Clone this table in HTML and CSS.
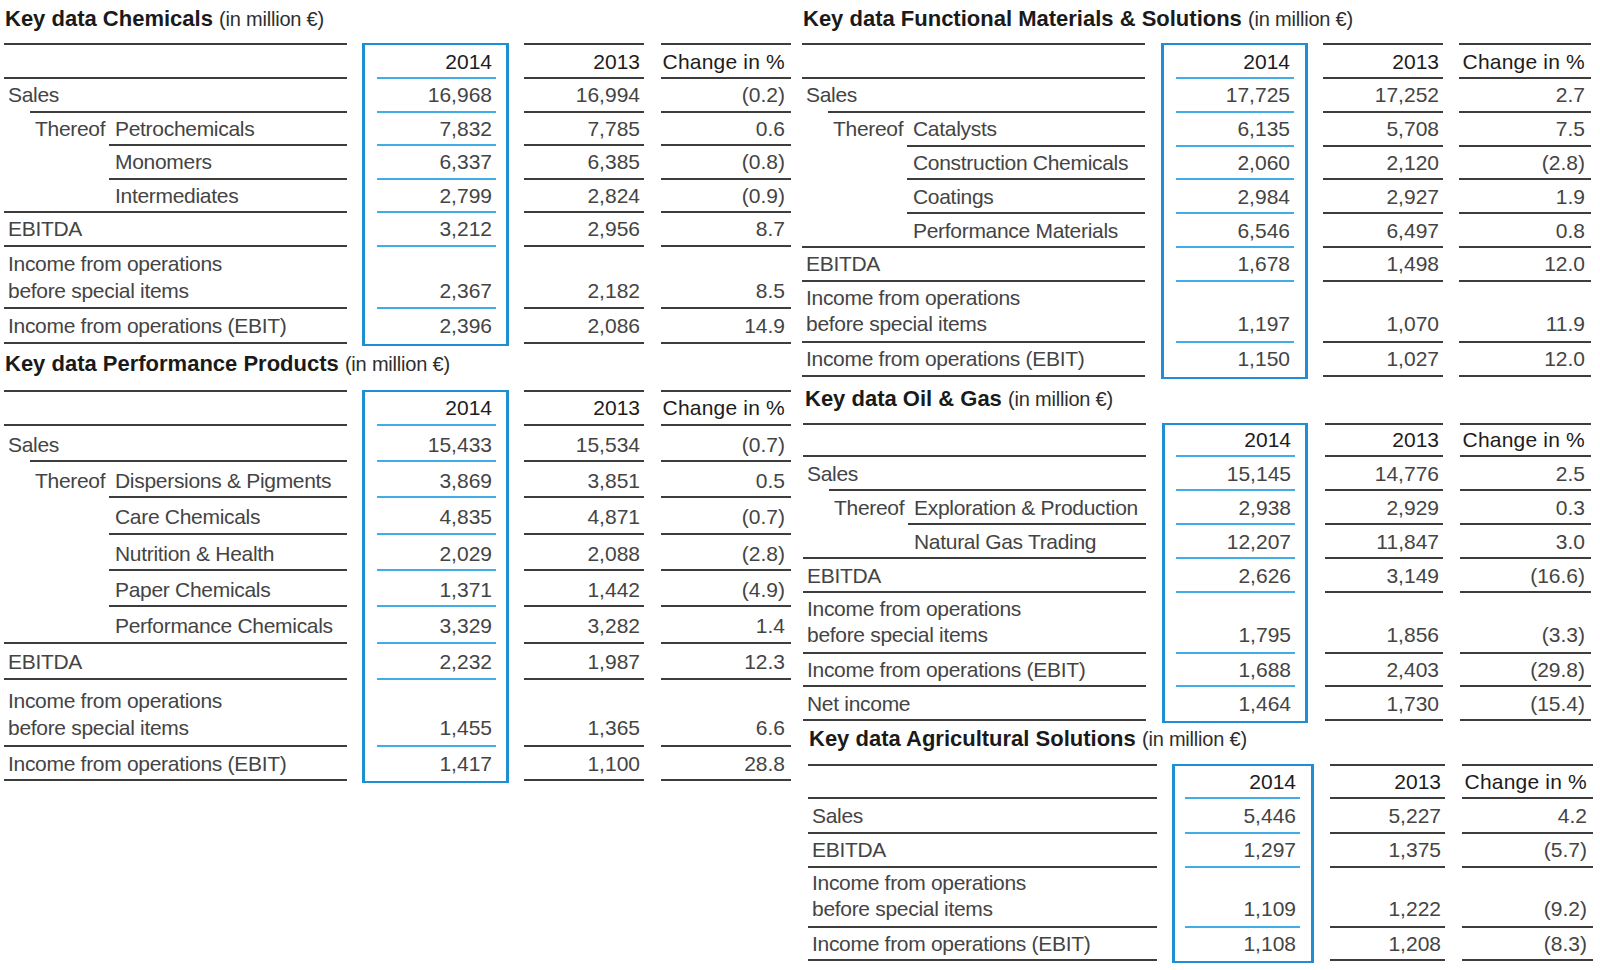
FILE: index.html
```html
<!DOCTYPE html>
<html lang="en">
<head>
<meta charset="utf-8">
<title>Key data segments</title>
<link rel="stylesheet" href="styles.css">
</head>
<body>
<div class="page">
  <div class="left">
    <section class="kd t1">
      <h2 class="ttl"><b>Key data Chemicals</b> <span class="unit">(in million €)</span></h2>
      <div class="grid">
        <div class="col c-lab">
          <div class="cell hdr"></div>
          <div class="cell ind1">Sales</div>
          <div class="cell sub"><span class="tf">Thereof</span><span>Petrochemicals</span></div>
          <div class="cell sub"><span class="tf"></span><span>Monomers</span></div>
          <div class="cell"><span class="tf"></span><span>Intermediates</span></div>
          <div class="cell">EBITDA</div>
          <div class="cell dbl"><span>Income from operations<br>before special items</span></div>
          <div class="cell rl">Income from operations (EBIT)</div>
        </div>
        <div class="col c-box">
          <div class="cell hdr num">2014</div>
          <div class="cell num">16,968</div>
          <div class="cell num">7,832</div>
          <div class="cell num">6,337</div>
          <div class="cell num">2,799</div>
          <div class="cell num">3,212</div>
          <div class="cell dbl num">2,367</div>
          <div class="cell rl num">2,396</div>
        </div>
        <div class="col c-13">
          <div class="cell hdr num">2013</div>
          <div class="cell num">16,994</div>
          <div class="cell num">7,785</div>
          <div class="cell num">6,385</div>
          <div class="cell num">2,824</div>
          <div class="cell num">2,956</div>
          <div class="cell dbl num">2,182</div>
          <div class="cell rl num">2,086</div>
        </div>
        <div class="col c-ch">
          <div class="cell hdr num">Change in %</div>
          <div class="cell num">(0.2)</div>
          <div class="cell num">0.6</div>
          <div class="cell num">(0.8)</div>
          <div class="cell num">(0.9)</div>
          <div class="cell num">8.7</div>
          <div class="cell dbl num">8.5</div>
          <div class="cell rl num">14.9</div>
        </div>
      </div>
    </section>

    <section class="kd t2">
      <h2 class="ttl"><b>Key data Performance Products</b> <span class="unit">(in million €)</span></h2>
      <div class="grid">
        <div class="col c-lab">
          <div class="cell hdr"></div>
          <div class="cell ind1">Sales</div>
          <div class="cell sub"><span class="tf">Thereof</span><span>Dispersions &amp; Pigments</span></div>
          <div class="cell sub"><span class="tf"></span><span>Care Chemicals</span></div>
          <div class="cell sub"><span class="tf"></span><span>Nutrition &amp; Health</span></div>
          <div class="cell sub"><span class="tf"></span><span>Paper Chemicals</span></div>
          <div class="cell"><span class="tf"></span><span>Performance Chemicals</span></div>
          <div class="cell">EBITDA</div>
          <div class="cell dbl"><span>Income from operations<br>before special items</span></div>
          <div class="cell rl">Income from operations (EBIT)</div>
        </div>
        <div class="col c-box">
          <div class="cell hdr num">2014</div>
          <div class="cell num">15,433</div>
          <div class="cell num">3,869</div>
          <div class="cell num">4,835</div>
          <div class="cell num">2,029</div>
          <div class="cell num">1,371</div>
          <div class="cell num">3,329</div>
          <div class="cell num">2,232</div>
          <div class="cell dbl num">1,455</div>
          <div class="cell rl num">1,417</div>
        </div>
        <div class="col c-13">
          <div class="cell hdr num">2013</div>
          <div class="cell num">15,534</div>
          <div class="cell num">3,851</div>
          <div class="cell num">4,871</div>
          <div class="cell num">2,088</div>
          <div class="cell num">1,442</div>
          <div class="cell num">3,282</div>
          <div class="cell num">1,987</div>
          <div class="cell dbl num">1,365</div>
          <div class="cell rl num">1,100</div>
        </div>
        <div class="col c-ch">
          <div class="cell hdr num">Change in %</div>
          <div class="cell num">(0.7)</div>
          <div class="cell num">0.5</div>
          <div class="cell num">(0.7)</div>
          <div class="cell num">(2.8)</div>
          <div class="cell num">(4.9)</div>
          <div class="cell num">1.4</div>
          <div class="cell num">12.3</div>
          <div class="cell dbl num">6.6</div>
          <div class="cell rl num">28.8</div>
        </div>
      </div>
    </section>
  </div>

  <div class="right">
    <section class="kd t3">
      <h2 class="ttl"><b>Key data Functional Materials &amp; Solutions</b> <span class="unit">(in million €)</span></h2>
      <div class="grid">
        <div class="col c-lab">
          <div class="cell hdr"></div>
          <div class="cell ind1">Sales</div>
          <div class="cell sub"><span class="tf">Thereof</span><span>Catalysts</span></div>
          <div class="cell sub"><span class="tf"></span><span>Construction Chemicals</span></div>
          <div class="cell sub"><span class="tf"></span><span>Coatings</span></div>
          <div class="cell"><span class="tf"></span><span>Performance Materials</span></div>
          <div class="cell">EBITDA</div>
          <div class="cell dbl"><span>Income from operations<br>before special items</span></div>
          <div class="cell rl">Income from operations (EBIT)</div>
        </div>
        <div class="col c-box">
          <div class="cell hdr num">2014</div>
          <div class="cell num">17,725</div>
          <div class="cell num">6,135</div>
          <div class="cell num">2,060</div>
          <div class="cell num">2,984</div>
          <div class="cell num">6,546</div>
          <div class="cell num">1,678</div>
          <div class="cell dbl num">1,197</div>
          <div class="cell rl num">1,150</div>
        </div>
        <div class="col c-13">
          <div class="cell hdr num">2013</div>
          <div class="cell num">17,252</div>
          <div class="cell num">5,708</div>
          <div class="cell num">2,120</div>
          <div class="cell num">2,927</div>
          <div class="cell num">6,497</div>
          <div class="cell num">1,498</div>
          <div class="cell dbl num">1,070</div>
          <div class="cell rl num">1,027</div>
        </div>
        <div class="col c-ch">
          <div class="cell hdr num">Change in %</div>
          <div class="cell num">2.7</div>
          <div class="cell num">7.5</div>
          <div class="cell num">(2.8)</div>
          <div class="cell num">1.9</div>
          <div class="cell num">0.8</div>
          <div class="cell num">12.0</div>
          <div class="cell dbl num">11.9</div>
          <div class="cell rl num">12.0</div>
        </div>
      </div>
    </section>

    <section class="kd t4">
      <h2 class="ttl"><b>Key data Oil &amp; Gas</b> <span class="unit">(in million €)</span></h2>
      <div class="grid">
        <div class="col c-lab">
          <div class="cell hdr"></div>
          <div class="cell ind1">Sales</div>
          <div class="cell sub"><span class="tf">Thereof</span><span>Exploration &amp; Production</span></div>
          <div class="cell"><span class="tf"></span><span>Natural Gas Trading</span></div>
          <div class="cell">EBITDA</div>
          <div class="cell dbl"><span>Income from operations<br>before special items</span></div>
          <div class="cell rl">Income from operations (EBIT)</div>
          <div class="cell rl">Net income</div>
        </div>
        <div class="col c-box">
          <div class="cell hdr num">2014</div>
          <div class="cell num">15,145</div>
          <div class="cell num">2,938</div>
          <div class="cell num">12,207</div>
          <div class="cell num">2,626</div>
          <div class="cell dbl num">1,795</div>
          <div class="cell rl num">1,688</div>
          <div class="cell rl num">1,464</div>
        </div>
        <div class="col c-13">
          <div class="cell hdr num">2013</div>
          <div class="cell num">14,776</div>
          <div class="cell num">2,929</div>
          <div class="cell num">11,847</div>
          <div class="cell num">3,149</div>
          <div class="cell dbl num">1,856</div>
          <div class="cell rl num">2,403</div>
          <div class="cell rl num">1,730</div>
        </div>
        <div class="col c-ch">
          <div class="cell hdr num">Change in %</div>
          <div class="cell num">2.5</div>
          <div class="cell num">0.3</div>
          <div class="cell num">3.0</div>
          <div class="cell num">(16.6)</div>
          <div class="cell dbl num">(3.3)</div>
          <div class="cell rl num">(29.8)</div>
          <div class="cell rl num">(15.4)</div>
        </div>
      </div>
    </section>

    <section class="kd t5">
      <h2 class="ttl"><b>Key data Agricultural Solutions</b> <span class="unit">(in million €)</span></h2>
      <div class="grid">
        <div class="col c-lab">
          <div class="cell hdr"></div>
          <div class="cell">Sales</div>
          <div class="cell">EBITDA</div>
          <div class="cell dbl"><span>Income from operations<br>before special items</span></div>
          <div class="cell rl">Income from operations (EBIT)</div>
        </div>
        <div class="col c-box">
          <div class="cell hdr num">2014</div>
          <div class="cell num">5,446</div>
          <div class="cell num">1,297</div>
          <div class="cell dbl num">1,109</div>
          <div class="cell rl num">1,108</div>
        </div>
        <div class="col c-13">
          <div class="cell hdr num">2013</div>
          <div class="cell num">5,227</div>
          <div class="cell num">1,375</div>
          <div class="cell dbl num">1,222</div>
          <div class="cell rl num">1,208</div>
        </div>
        <div class="col c-ch">
          <div class="cell hdr num">Change in %</div>
          <div class="cell num">4.2</div>
          <div class="cell num">(5.7)</div>
          <div class="cell dbl num">(9.2)</div>
          <div class="cell rl num">(8.3)</div>
        </div>
      </div>
    </section>
  </div>
</div>
</body>
</html>
```

FILE: styles.css
```css
* {
  box-sizing: border-box;
}

body {
  margin: 0;
  padding-top: 6px;
  background: #ffffff;
  font-family: "Liberation Sans", Arial, Helvetica, sans-serif;
  color: #444444;
}

.page {
  display: flex;
  align-items: flex-start;
}

.left {
  margin-left: 4px;
  width: 787px;
  flex: none;
}

.right {
  margin-left: 11px;
  width: 794px;
  flex: none;
}

/* ---------- table block ---------- */
.kd {
  --ln: #3d3d3d;
  --bl: #41ade6;
  --bx: #1e8fd5;
  --lh: 26.5px;
  --wl: 343px;
  --g1: 15px;
  --wb: 147px;
  --g2: 15px;
  --w13: 120px;
  --g3: 17px;
  --wc: 130px;
  --bpl: 12px;
  --bpr: 10px;
  --hdr: 34.4px;
  --r: 33.5px;
  --r2: 62.3px;
  --rl: 34.4px;
}

.kd + .kd {
  margin-top: 7px;
}

.kd + .kd.t2 {
  margin-top: 5px;
}

.t2 .ttl {
  margin-bottom: 13px;
}

.kd + .kd.t5 {
  margin-top: 3px;
}

.t2 {
  --lh: 27.5px;
  --hdr: 34.3px;
  --r: 36.3px;
  --r2: 66.7px;
  --rl: 34.6px;
}

.t3 {
  --g1: 16px;
  --g3: 16px;
  --wc: 132px;
  --bpl: 12px;
  --bpr: 11px;
  --hdr: 34.1px;
  --r: 33.8px;
  --r2: 61.1px;
  --rl: 33.7px;
}

.t4 {
  margin-left: 1px;
  --g1: 16px;
  --wb: 146px;
  --g2: 17px;
  --w13: 118px;
  --g3: 17px;
  --wc: 131px;
  --bpl: 11px;
  --bpr: 10px;
  --hdr: 32.7px;
  --r: 34px;
  --r2: 60.5px;
  --rl: 33.6px;
}

.t5 {
  margin-left: 6px;
  --wl: 349px;
  --g1: 15px;
  --wb: 142px;
  --g2: 16px;
  --w13: 115px;
  --g3: 17px;
  --wc: 131px;
  --bpl: 10px;
  --bpr: 11px;
  --hdr: 33.3px;
  --r: 34.2px;
  --r2: 60px;
  --rl: 33.3px;
}

.t5 .ttl {
  margin-bottom: 12px;
}

.ttl {
  margin: 0 0 11px;
  padding-left: 1px;
  font-size: 22px;
  line-height: 26px;
  font-weight: bold;
  color: #1a1a1a;
  white-space: nowrap;
}

.t4 .ttl {
  padding-left: 2px;
}

.ttl .unit {
  font-weight: normal;
  font-size: 20px;
  letter-spacing: -0.2px;
  color: #2e2e2e;
}

/* ---------- columns ---------- */
.grid {
  display: flex;
  align-items: flex-start;
}

.col {
  flex: none;
}

.c-lab {
  width: var(--wl);
  border-top: 2px solid var(--ln);
}

.c-box {
  width: var(--wb);
  margin-left: var(--g1);
  border: 3px solid var(--bx);
  border-top-width: 2px;
  border-bottom-width: 2px;
  padding: 0 var(--bpr) 0 var(--bpl);
}

.c-13 {
  width: var(--w13);
  margin-left: var(--g2);
  border-top: 2px solid var(--ln);
}

.c-ch {
  width: var(--wc);
  margin-left: var(--g3);
  border-top: 2px solid var(--ln);
}

/* ---------- cells ---------- */
.cell {
  height: var(--r);
  border-bottom: 2px solid var(--ln);
  display: flex;
  align-items: flex-end;
  padding-bottom: 2px;
  font-size: 21px;
  line-height: var(--lh);
  white-space: nowrap;
}

.cell.hdr {
  height: var(--hdr);
  color: #1c1c1c;
}

.c-ch .cell.hdr {
  letter-spacing: 0.2px;
}

.cell.dbl {
  height: var(--r2);
  padding-bottom: 3px;
}

.cell.rl {
  height: var(--rl);
}

.c-lab .cell {
  padding-left: 4px;
  letter-spacing: -0.3px;
}

.num {
  justify-content: flex-end;
  padding-right: 4px;
}

.c-ch .cell {
  padding-right: 6px;
}

.c-box .cell {
  border-bottom-color: var(--bl);
}

.c-box .cell:last-child {
  border-bottom: 0;
  padding-bottom: 4px;
}

.c-lab .cell.ind1 {
  border-bottom: 0;
  padding-bottom: 4px;
  background: linear-gradient(var(--ln), var(--ln)) right bottom / calc(100% - 26px) 2px no-repeat;
}

.c-lab .cell.sub {
  border-bottom: 0;
  padding-bottom: 4px;
  background: linear-gradient(var(--ln), var(--ln)) right bottom / calc(100% - 105px) 2px no-repeat;
}

.tf {
  flex: none;
  width: 107px;
  padding-left: 27px;
}
```
